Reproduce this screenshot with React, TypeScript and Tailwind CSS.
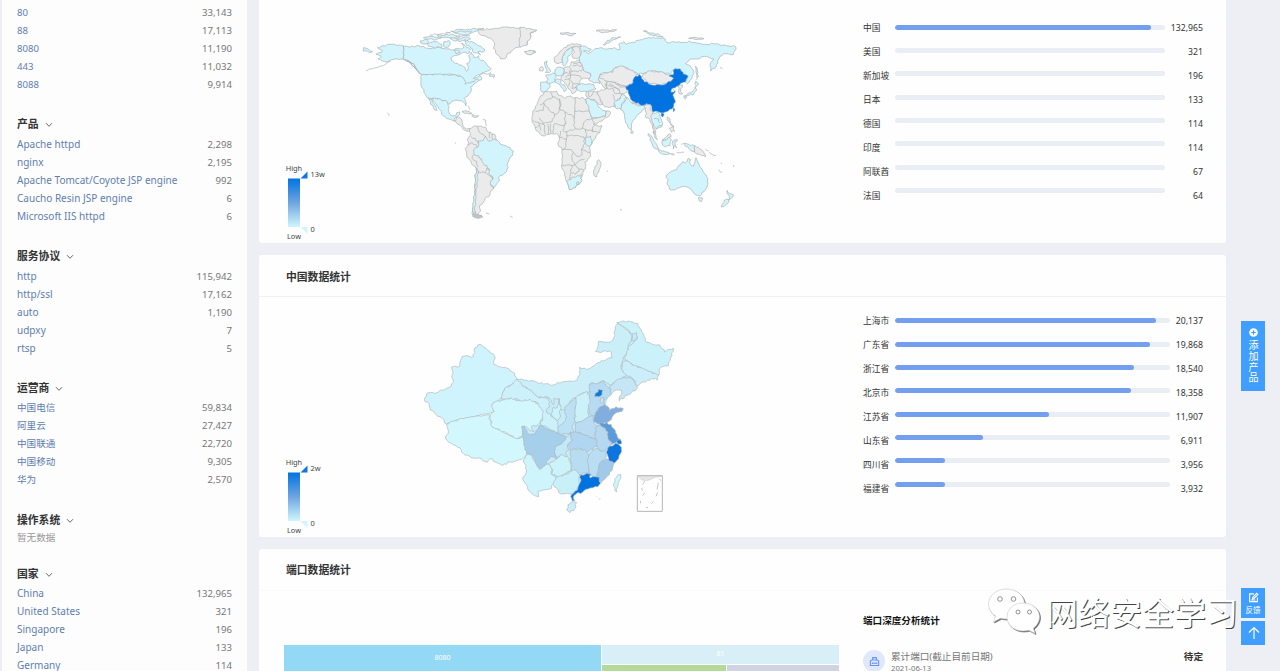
import React from "react";

type Row = [string, string];
type Shape = [string, string];

/* ---------- geometry helpers ---------- */

const hash = (a: number, b: number) => {
  const s = Math.sin(a * 12.9898 + b * 78.233) * 43758.5453;
  return s - Math.floor(s) - 0.5;
};

/** Turns a list of points into a path with slightly irregular, coast-like edges. */
function coast(points: string, close = true, amp = 6): string {
  const pts = points.trim().split(/\s+/).map((p) => p.split(",").map(Number));
  const n = pts.length;
  let d = "";
  for (let i = 0; i < (close ? n : n - 1); i++) {
    const a = pts[i];
    const b = pts[(i + 1) % n];
    const len = Math.hypot(b[0] - a[0], b[1] - a[1]);
    const steps = Math.max(1, Math.round(len / 7));
    d += (i === 0 ? "M" : "L") + a[0] + "," + a[1];
    for (let k = 1; k < steps; k++) {
      const t = k / steps;
      const x = a[0] + (b[0] - a[0]) * t;
      const y = a[1] + (b[1] - a[1]) * t;
      const o = hash(Math.round(x), Math.round(y)) * amp;
      d += "L" + (x - ((b[1] - a[1]) / len) * o).toFixed(1) + "," + (y + ((b[0] - a[0]) / len) * o).toFixed(1);
    }
    if (!close && i === n - 2) d += "L" + b[0] + "," + b[1];
  }
  return close ? d + "Z" : d;
}

const C = "#d2f5fd";
const G = "#ebebeb";
const B = "#0073e1";

const west: Shape[] = [
  [C, "160,93 140,91 120,88 100,92 82,98 97,106 94,113 78,118 94,124 84,132 96,138 110,141 125,134 138,131 160,132"],
  [C, "40,98 55,102 68,110 58,113 40,108"],
  [C, "160,93 180,97 200,92 220,94 240,101 262,97 282,101 305,105 318,100 332,102 342,96 334,84 346,92 362,104 358,114 340,112 324,120 308,124 304,136 316,146 334,150 346,158 350,169 355,160 350,146 360,136 356,122 364,112 372,128 386,122 392,136 404,140 412,152 424,162 412,168 396,174 382,180 370,192 388,182 396,188 388,196 372,200 360,204 345,208 344,196 332,184 310,179 215,179 204,168 194,152 178,138 160,132"],
  [C, "215,179 310,179 332,184 344,196 345,208 360,204 384,192 386,197 372,206 362,216 364,222 356,238 343,250 349,264 347,273 341,262 325,257 305,259 296,268 286,256 276,258 266,251 235,249 222,232 213,210"],
  [C, "248,250 266,251 276,258 286,256 294,270 296,290 306,303 318,302 320,293 329,291 325,303 313,310 312,318 296,312 280,302 266,280"],
  [C, "235,249 246,252 252,268 260,287 250,278"],
  [G, "312,318 325,306 336,315 338,330 350,342 360,340 358,349 344,346 330,330"],
  [G, "358,343 372,333 392,333 408,338 415,352 434,358 442,378 430,380 404,390 382,402 386,424 402,440 418,460 430,490 432,517 424,526 420,540 405,550 400,562 388,576 392,588 382,600 374,606 366,596 368,580 374,530 378,460 364,445 350,418 346,400 356,386 352,376 360,362"],
  [C, "385,378 400,376 406,364 415,378 432,372 442,376 452,388 480,398 490,408 487,422 476,438 470,470 450,482 444,502 432,517 420,500 430,490 416,475 418,462 400,445 385,422 372,418 371,405 384,396"],
  [C, "379,458 386,474 381,500 378,530 376,560 373,582 378,596 368,590 371,560 376,510"],
  ["#bfc5c6", "370,594 382,598 398,606 384,610 368,604"],
  [G, "383,46 410,41 450,39 490,37 528,42 560,46 540,54 543,66 530,78 530,90 508,96 484,108 470,122 464,131 452,132 442,120 430,100 434,84 422,70 400,62 386,54"],
  [G, "524,110 540,106 557,111 545,118 530,117"],
  [C, "210,78 225,73 236,79 232,86 214,85"],
  [C, "232,86 255,80 275,88 276,97 250,97 236,94"],
  [C, "220,68 250,65 275,68 260,73 230,74"],
  [C, "282,80 296,76 300,88 290,98 280,90"],
  [C, "262,62 290,58 312,60 330,66 310,72 280,68"],
  [C, "304,48 340,44 372,40 402,41 380,48 360,56 338,60 316,56"],
  [C, "300,70 330,72 352,66 362,72 344,78 316,78"],
  [C, "344,74 365,80 384,92 405,104 402,110 384,110 392,120 372,114 368,102 352,92"],
  [C, "312,106 326,106 330,114 318,116"],
  [C, "420,176 434,180 432,187 418,184"],
  [G, "336,290 352,288 366,296 352,295"],
  [G, "368,298 386,302 380,307 366,304"],
];

const westLines = [
  "48,168 66,162 84,157 104,150 122,140",
  "160,134 178,140 188,152 200,164 214,178",
  "166,136 184,146 196,162",
  "170,138 186,144 198,158 208,172",
  "286,54 304,50",
  "240,60 268,58 300,54",
  "310,52 340,50 366,48",
  "318,64 340,62 360,62",
  "388,182 400,174 414,178 424,170",
  "382,334 388,352 402,360 408,366",
  "362,364 376,370 384,386",
  "352,388 366,382 382,396",
  "372,418 366,430 380,440 384,456",
  "386,470 404,472 410,460 418,464",
  "404,472 420,484 428,494",
  "418,352 420,370",
  "428,356 428,372",
  "420,508 432,518",
  "112,293 118,302",
  "314,383 318,385",
  "408,594 418,597",
  "480,603 488,607",
  "398,313 408,316 408,334",
  "355,272 361,285",
];

const east: Shape[] = [
  [G, "0,36 25,40 50,46 30,54 33,66 22,78 22,90 0,97"],
  [G, "14,110 30,106 47,111 35,118 20,117"],
  [C, "73,142 82,138 81,150 88,160 93,168 88,173 76,173 82,165 76,156"],
  [G, "58,160 66,154 71,160 68,168 58,167"],
  [C, "62,202 85,203 91,210 84,222 78,230 66,231 61,224"],
  [C, "76,182 90,180 98,174 108,182 104,192 106,200 92,205 80,202 84,192"],
  [C, "106,162 118,156 130,160 132,172 124,182 110,182 104,174"],
  [C, "106,194 118,192 122,204 136,216 140,222 132,230 128,220 114,206 106,202"],
  [G, "104,142 102,128 116,116 132,98 150,90 170,86 184,90 176,96 156,96 140,108 130,124 126,142 114,146"],
  [C, "128,148 126,132 136,110 152,98 160,104 156,114 144,124 144,136 138,148 132,154"],
  [G, "156,98 174,94 180,110 182,122 172,130 160,130 156,122 164,112"],
  [G, "130,160 148,156 154,140 180,136 186,148 190,166 212,176 208,192 190,190 180,196 176,210 166,216 168,230 156,236 150,224 136,208 122,194 124,184 132,174"],
  [C, "170,214 180,208 200,208 222,210 228,222 208,230 184,230 172,224"],
  [C, "180,95 196,94 214,102 208,110 190,108 206,116 222,104 240,98 262,102 284,98 300,104 296,88 312,80 320,88 338,82 356,76 380,70 400,66 420,70 436,72 440,82 462,80 490,82 508,78 530,84 560,88 590,86 620,92 647,95 644,108 640,118 618,116 600,124 594,144 584,160 572,168 570,152 582,132 560,124 540,130 508,134 496,146 514,158 522,172 516,190 502,206 496,200 504,184 490,178 482,162 466,160 450,178 430,172 395,168 370,176 355,178 332,166 310,154 285,158 276,170 240,178 236,190 240,206 222,204 206,194 212,176 190,166 186,148 178,132 184,114"],
  [G, "240,178 262,174 278,172 285,158 310,154 332,166 355,178 342,190 338,204 318,214 300,210 284,202 262,200 256,208 264,220 252,218 244,206 234,192"],
  [G, "262,200 284,202 300,210 318,214 320,232 304,236 300,250 286,262 284,276 262,276 248,268 240,252 234,240 232,228 250,226 262,220"],
  [G, "200,230 222,228 234,240 240,252 248,268 236,268 224,254 206,250 198,244"],
  [G, "215,310 234,308 254,304 258,288 272,292 264,306 246,318 224,328"],
  [C, "196,252 206,250 222,256 234,274 248,286 258,288 256,304 234,308 218,308 208,288 198,268"],
  [C, "282,262 300,252 306,238 318,244 314,258 304,270 304,282 286,278"],
  [C, "304,270 314,258 320,246 328,256 336,264 356,270 372,270 388,268 384,278 368,284 354,298 340,316 334,344 326,340 316,316 312,294 302,284"],
  [G, "334,262 360,266 362,272 338,266"],
  [G, "334,346 340,350 337,356 332,354"],
  [G, "370,176 395,168 430,172 450,180 462,188 456,198 440,206 418,209 392,206 378,196 366,184"],
  [B, "318,215 340,203 342,190 358,179 370,195 385,207 418,210 440,206 462,190 448,183 460,180 464,162 480,162 490,178 504,184 496,200 470,214 454,222 452,232 466,228 458,240 466,260 460,276 444,288 420,292 398,290 392,268 380,265 372,270 348,264 332,252 325,234"],
  [B, "424,295 432,297 428,306 424,302"],
  [B, "460,280 464,282 461,290"],
  [G, "372,274 388,268 394,288 404,298 396,308 400,330 406,356 398,340 390,314 378,308 376,290"],
  [C, "398,294 414,291 420,304 427,322 424,336 410,342 402,332 396,320 392,306"],
  [G, "400,348 408,360 412,374 404,368"],
  [C, "384,356 398,370 410,388 416,402 408,402 396,386"],
  [C, "414,404 432,408 450,416 440,419 418,412"],
  [C, "426,378 440,374 450,362 454,374 450,392 436,396 428,390"],
  [G, "426,376 440,366 450,356 454,364 440,374"],
  [C, "458,378 472,374 464,382 470,398 462,392 460,402"],
  [G, "442,306 450,312 452,326 462,336 454,332 446,320"],
  [G, "448,340 460,336 464,348 454,352"],
  [C, "492,384 506,388 524,392 524,410 508,402 496,394"],
  [G, "524,392 540,402 552,414 556,426 540,418 524,412"],
  [C, "528,198 536,206 530,214 524,206"],
  [C, "526,214 530,226 520,240 504,242 494,244 506,234 518,228"],
  [C, "492,242 500,246 496,252"],
  [G, "474,214 488,210 482,222 488,236 480,238 476,226"],
  [C, "526,154 532,166 536,184 530,188 528,170"],
  [C, "440,480 452,470 470,464 476,452 488,440 496,444 504,430 512,434 510,446 520,454 525,440 528,428 534,442 542,458 558,480 564,504 552,530 540,543 524,538 514,524 506,518 486,514 466,524 448,522 442,500"],
  [C, "535,548 547,549 544,560 538,558"],
  [C, "621,526 630,536 641,540 632,552 624,556 628,544"],
  [C, "620,552 627,556 614,572 604,576 606,568"],
  [G, "58,250 72,232 92,230 110,228 114,240 134,250 146,244 166,248 192,250 204,270 206,288 214,308 222,330 246,332 240,352 226,370 210,392 212,424 194,442 196,462 188,478 184,496 166,518 148,523 140,500 134,480 125,450 128,422 126,404 114,388 118,368 110,356 92,356 66,362 48,346 36,322 38,294"],
  [C, "196,368 212,364 216,376 210,394 196,386"],
  [C, "140,500 152,494 160,486 172,482 184,478 186,496 166,518 148,523"],
  [G, "236,434 243,444 238,464 230,486 222,482 224,460"],
  [C, "250,90 262,76 284,68 302,66 280,74 266,84 256,90"],
  [G, "120,54 140,52 168,56 150,62 130,58"],
  [G, "228,48 256,46 290,44 268,50 240,51"],
  [C, "370,48 400,54 430,66 408,62 384,56"],
  [G, "506,70 530,68 552,71 528,74"],
];

const eastLines = [
  "92,232 98,246 70,264 60,270",
  "72,264 70,286 46,290",
  "70,264 104,300 96,320 70,326 58,308",
  "98,246 118,252 118,286 104,300",
  "118,252 122,286 134,290 164,308",
  "166,248 162,310",
  "162,288 204,288",
  "134,290 138,322 130,332 104,326",
  "164,308 160,330 166,342 186,340 196,318 214,310",
  "104,326 100,356",
  "84,328 86,358",
  "74,330 76,358",
  "92,326 92,356",
  "38,316 56,322 62,346",
  "58,322 74,332",
  "46,338 58,330",
  "138,322 128,346 140,350 164,342",
  "122,348 118,368 140,372 138,394 126,404",
  "140,350 138,372",
  "140,362 176,362 192,366 194,386 184,402 186,420 170,424 160,412 154,404 128,404",
  "196,342 198,366",
  "222,332 216,350 238,352",
  "186,340 196,344 220,346",
  "184,402 210,412",
  "160,412 156,430 164,450 178,436 194,432",
  "126,450 156,452 164,450",
  "156,452 150,492",
  "154,474 166,478 178,462 192,466",
  "164,450 178,462",
  "170,502 176,500 178,508 170,508 170,502",
  "150,158 152,172 132,176",
  "154,170 186,168",
  "152,180 176,182 184,190",
  "136,186 152,180 148,166",
  "134,194 150,192 152,180",
  "146,194 160,206 176,206",
  "150,200 146,214",
  "158,206 156,220 170,216",
  "160,144 184,144",
  "158,152 186,152",
  "236,186 262,198",
  "256,208 280,218 300,226",
  "284,202 300,216 318,216",
  "262,220 280,222 286,236 304,236",
  "268,204 290,220 300,234",
  "206,230 204,244",
  "222,228 216,240 206,244",
  "278,238 284,256",
  "466,230 458,222",
  "534,188 526,196",
  "408,342 414,334 426,332",
  "402,310 416,312 420,324",
  "470,412 480,414 492,412",
  "450,416 464,417",
  "454,418 462,421",
  "484,388 490,386",
  "556,402 566,408",
  "568,412 588,422",
  "596,464 606,472",
  "640,450 642,456",
  "602,444 606,446",
  "300,583 306,586",
  "260,468 264,469",
  "478,248 480,250",
  "600,158 608,160",
];

const china: Shape[] = [
  ["#d0f4fd", "45,263 56,248 74,250 92,240 118,232 130,218 124,172 150,168 158,138 190,140 194,114 210,103 232,120 254,138 252,164 290,174 314,190 322,208 308,222 284,236 276,264 246,282 252,304 236,312 200,318 160,326 136,332 110,342 90,320 60,300 58,282 46,276"],
  ["#d2f7fd", "110,342 136,332 160,326 200,318 236,312 246,350 270,360 300,376 322,386 336,380 346,400 352,436 334,448 300,456 278,467 258,456 240,446 232,457 206,444 180,440 160,430 150,414 124,400 106,384 114,372"],
  ["#d2f7fd", "240,316 252,304 246,282 276,270 304,264 330,272 360,268 386,282 400,304 398,324 384,344 364,350 372,364 356,358 338,348 336,380 322,386 300,376 270,360 246,350"],
  ["#ccf1fb", "322,208 336,212 336,226 362,240 378,256 384,262 414,262 420,290 408,302 424,320 440,330 444,352 440,372 422,360 400,348 388,348 398,324 400,304 386,282 360,268 330,272 304,264 276,268 284,236 308,222"],
  ["#cbeff9", "322,208 370,212 400,222 430,225 456,216 480,213 500,212 510,194 508,172 530,178 550,168 574,152 606,142 604,126 586,122 572,128 556,124 566,94 600,97 612,82 616,50 624,38 640,50 658,66 668,74 664,90 654,104 650,130 640,142 636,160 634,176 650,196 634,206 616,214 600,226 580,212 560,222 542,220 540,244 516,250 498,262 480,275 466,300 450,300 448,272 432,264 430,284 414,262 384,262 378,256 362,240 336,226"],
  ["#cbf2fb", "620,38 655,33 682,40 694,60 706,92 730,104 748,104 764,126 790,115 786,138 776,156 774,168 748,176 746,196 716,184 690,172 670,166 654,154 642,142 650,130 654,112 672,96 682,82 680,68 664,72 640,50"],
  ["#cbeefa", "642,154 654,154 670,166 690,172 716,184 746,196 742,210 724,206 700,216 684,228 666,204 650,198 634,176"],
  ["#c5e6f5", "634,206 650,204 666,204 674,220 684,232 664,248 628,272 634,240 612,244 600,256 602,226 616,214"],
  ["#b6dbf2", "538,222 560,222 580,212 588,226 602,236 604,254 590,266 580,270 584,284 566,294 554,318 540,314 534,282 540,244"],
  ["#cbf2f9", "498,262 516,250 534,246 540,270 534,300 536,320 516,334 496,340 494,306"],
  ["#bde1f4", "480,276 498,264 494,306 494,338 486,352 492,368 470,372 446,370 444,352 462,336 470,320 464,304 464,290"],
  ["#ccf2fa", "430,292 442,292 446,264 454,292 448,304 452,318 442,332 426,318"],
  ["#b9dcf2", "496,342 516,334 536,320 550,318 552,340 566,348 556,366 558,384 540,382 516,370 496,366"],
  ["#b6d8f1", "556,352 570,344 580,356 592,356 594,376 598,392 608,402 594,416 578,424 562,412 556,386"],
  ["#82aedf", "554,318 566,294 584,284 598,294 598,302 618,290 640,296 636,304 618,308 604,328 590,340 570,342 550,334"],
  ["#5b9bdc", "568,340 590,338 604,344 616,362 622,380 632,388 622,396 606,402 594,386 594,366 580,352"],
  ["#0a77e2", "620,394 632,390 634,402 624,402"],
  ["#0c75df", "588,426 600,408 616,400 634,412 632,430 626,446 612,460 596,452"],
  ["#b0d6f1", "480,366 496,366 516,372 540,382 558,386 562,408 548,416 530,424 510,416 478,416 472,404 486,392"],
  ["#c3e8f7", "434,412 450,404 466,384 480,368 486,392 472,404 476,420 466,430 470,444 450,438 438,446"],
  ["#a5cfeb", "335,350 344,350 356,372 374,372 386,350 400,348 422,360 440,368 468,380 462,394 448,404 434,412 434,430 440,446 422,440 410,452 404,468 388,478 378,462 366,436 350,432 342,396"],
  ["#b8ddf3", "480,420 510,416 530,424 538,436 534,456 536,490 520,488 506,494 484,480"],
  ["#b9def4", "538,432 548,418 562,414 578,424 590,424 588,442 574,456 566,474 564,496 548,500 538,490 534,460"],
  ["#a1c9ea", "588,446 598,454 612,460 606,482 592,498 574,518 560,500 566,474 574,454"],
  ["#0073e0", "512,494 530,490 544,492 540,504 554,500 568,502 572,520 564,530 540,534 518,546 498,552 490,560 494,572 486,572 484,554 502,540 510,518"],
  ["#c9eff8", "430,510 444,498 470,492 492,478 508,492 508,518 500,538 486,552 452,552 442,536 430,526"],
  ["#cdf3fa", "414,462 438,448 454,432 472,440 480,456 482,480 460,494 442,500 424,492 428,478"],
  ["#cef5fb", "340,450 352,434 366,436 378,462 388,478 404,468 414,462 426,478 424,492 438,504 430,520 424,536 400,540 384,544 386,560 370,554 356,542 350,524 338,508 350,480"],
  ["#c9eff9", "474,584 484,576 500,578 494,596 480,608 470,600"],
  ["#cff6fc", "610,528 614,508 624,494 632,494 628,514 622,532 620,546"],
  ["#0b78de", "556,250 564,246 566,238 578,240 576,254 566,260 554,260"],
  ["#c5e6f5", "572,264 582,262 582,278 570,276"],
];

const chinaLines = [
  "658,66 668,84 664,92 676,90 682,80",
  "566,568 571,566",
  "560,560 562,562",
];

function WorldMap() {
  return (
    <svg viewBox="0 0 1200 645" className="ml-[15px] mt-[15px] h-[215px] w-[400px] shrink-0" strokeLinejoin="round">
      <g stroke="#a3abad" strokeWidth="1.9">
        {west.map(([f, p], i) => (
          <path key={i} d={coast(p)} fill={f} />
        ))}
        {westLines.map((p, i) => (
          <path key={i} d={coast(p, false)} fill="none" />
        ))}
      </g>
      <g transform="translate(510 0)" stroke="#a3abad" strokeWidth="1.9">
        {east.map(([f, p], i) => (
          <path key={i} d={coast(p)} fill={f} stroke={f === B ? "#3a86d4" : undefined} />
        ))}
        {eastLines.map((p, i) => (
          <path key={i} d={coast(p, false)} fill="none" />
        ))}
      </g>
    </svg>
  );
}

function ChinaMap() {
  return (
    <svg viewBox="0 0 840 645" className="ml-[75px] mt-[13px] h-[215px] w-[280px] shrink-0" strokeLinejoin="round">
      <path
        d="M250 280L330 232L500 238L600 155L632 130L640 62L690 64L690 160L680 215L600 240L575 330L600 400L590 440L560 490L500 520L440 520L350 440L300 370Z"
        fill="#c6ebf8"
      />
      <g stroke="#adb8bb" strokeWidth="2">
        {china.map(([f, p], i) => (
          <path key={i} d={coast(p)} fill={f} />
        ))}
        {chinaLines.map((p, i) => (
          <path key={i} d={coast(p, false)} fill="none" />
        ))}
      </g>
      <rect x="682" y="497" width="75" height="107" fill="#fff" stroke="#b5b5b5" strokeWidth="3" />
      <path d="M683 499L696 510L712 512L736 502L755 499Z" fill="#e6e6e6" stroke="#c4c4c4" strokeWidth="1.5" />
      <path
        d="M704 513L698 524M748 506L752 512M745 518L741 538M695 534L697 542M704 549L698 557M743 547L738 559M691 572L692 580M730 575L724 581M708 592L714 593"
        stroke="#a8a8a8"
        strokeWidth="2"
        fill="none"
      />
    </svg>
  );
}

function Legend({ id, max, className }: { id: string; max: string; className: string }) {
  return (
    <svg viewBox="0 0 52 80" className={`h-[80px] w-[52px] shrink-0 ${className}`}>
      <defs>
        <linearGradient id={id} x1="0" y1="0" x2="0" y2="1">
          <stop offset="0" stopColor="#0073e1" />
          <stop offset="0.5" stopColor="#6ea5e0" />
          <stop offset="1" stopColor="#cff6fd" />
        </linearGradient>
      </defs>
      <rect x="5" y="18.5" width="12" height="48.5" fill={`url(#${id})`} />
      <path d="M17.5 18.5L24.5 11.5V18.5Z" fill="#0f76df" />
      <path d="M17.5 67H24.5V74Z" fill="#d0f5fc" />
      <g fill="#444" fontSize="7.4" fontFamily="'Noto Sans', sans-serif">
        <text x="2.7" y="11.4">High</text>
        <text x="4" y="78.6">Low</text>
        <text x="27.5" y="17.4">{max}</text>
        <text x="27.5" y="72.3">0</text>
      </g>
    </svg>
  );
}

/* ---------- data ---------- */

const sections: { title: string; rows: Row[]; lowered?: boolean }[] = [
  { title: "产品", lowered: true, rows: [["Apache httpd", "2,298"], ["nginx", "2,195"], ["Apache Tomcat/Coyote JSP engine", "992"], ["Caucho Resin JSP engine", "6"], ["Microsoft IIS httpd", "6"]] },
  { title: "服务协议", lowered: true, rows: [["http", "115,942"], ["http/ssl", "17,162"], ["auto", "1,190"], ["udpxy", "7"], ["rtsp", "5"]] },
  { title: "运营商", rows: [["中国电信", "59,834"], ["阿里云", "27,427"], ["中国联通", "22,720"], ["中国移动", "9,305"], ["华为", "2,570"]] },
  { title: "操作系统", rows: [] },
  { title: "国家", rows: [["China", "132,965"], ["United States", "321"], ["Singapore", "196"], ["Japan", "133"], ["Germany", "114"]] },
];

const ports: Row[] = [["80", "33,143"], ["88", "17,113"], ["8080", "11,190"], ["443", "11,032"], ["8088", "9,914"]];

const countries: [string, string, number][] = [
  ["中国", "132,965", 256], ["美国", "321", 0], ["新加坡", "196", 0], ["日本", "133", 0],
  ["德国", "114", 0], ["印度", "114", 0], ["阿联酋", "67", 0], ["法国", "64", 0],
];

const provinces: [string, string, number][] = [
  ["上海市", "20,137", 261], ["广东省", "19,868", 255], ["浙江省", "18,540", 239], ["北京市", "18,358", 236],
  ["江苏省", "11,907", 153.5], ["山东省", "6,911", 87.5], ["四川省", "3,956", 49.5], ["福建省", "3,932", 49.5],
];

/* ---------- pieces ---------- */

function Rows({ rows, lowered }: { rows: Row[]; lowered?: boolean }) {
  return (
    <ul className={lowered ? "-mb-px pt-px" : ""}>
      {rows.map(([k, v]) => (
        <li key={k} className="flex h-[18px] items-center justify-between text-[#5f7eae]">
          <span className={/[A-Za-z]/.test(k) ? "mb-[2px] text-[10px] leading-[16px] tracking-[0.02px]" : ""}>{k}</span>
          <span className="text-[#777]">{v}</span>
        </li>
      ))}
    </ul>
  );
}

function BarList({ items, wide }: { items: [string, string, number][]; wide?: boolean }) {
  return (
    <div className="flex w-[340px] text-[8.7px] text-[#333]">
      <div className="w-[32px] shrink-0 pt-px">
        {items.map(([k]) => (
          <div key={k} className="flex h-[23.95px] items-center whitespace-nowrap">{k}</div>
        ))}
      </div>
      <div className={`shrink-0 ${wide ? "w-[275px]" : "w-[270px]"}`}>
        {items.map(([k, , w]) => (
          <div key={k} className="flex h-[23.35px] items-center">
            <div className="h-[5px] w-full overflow-hidden rounded-full bg-[#e9edf4]">
              <div className="h-full rounded-full bg-[#739fee]" style={{ width: w }} />
            </div>
          </div>
        ))}
      </div>
      <div className="flex-1 pt-px">
        {items.map(([k, v]) => (
          <div key={k} className="flex h-[23.95px] items-center justify-end">{v}</div>
        ))}
      </div>
    </div>
  );
}

function CardTitle({ children, className }: { children: React.ReactNode; className: string }) {
  return (
    <h2 className={`flex h-[42px] items-center border-b pl-[27px] text-[10.8px] font-bold text-[#333] ${className}`}>{children}</h2>
  );
}

function Watermark() {
  return (
    <div className="absolute left-[985px] top-[587px] flex items-center">
      <svg viewBox="0 0 60 52" className="h-[52px] w-[60px] shrink-0 drop-shadow-[1px_1px_0.5px_#666]">
        <g fill="#fff" stroke="#c8c8c8" strokeWidth="0.6">
          <path d="M21.5 2C11.500 2 3.500 8.500 3.500 17C3.500 22 6.200 26.300 10.500 29L8.500 35L15.500 31.300C17.500 31.900 19.500 32 21.500 32C31.500 32 39.500 25.500 39.500 17S31.500 2 21.500 2Z" />
          <path d="M38 16C29 16 22 22 22 30C22 38 29 44 38 44C40 44 42 43.700 43.800 43.200L50 46.500L48.400 41.200C52 38.600 54.500 34.500 54.500 30C54.500 22 47 16 38 16Z" />
        </g>
        <g fill="#fff" stroke="#777" strokeWidth="0.8">
          <circle cx="15" cy="12" r="2.300" />
          <circle cx="28.500" cy="12" r="2.300" />
          <circle cx="33" cy="25" r="2" />
          <circle cx="44.500" cy="25" r="2" />
        </g>
      </svg>
      <span className="ml-px whitespace-nowrap text-[32px] leading-[52px] text-white [text-shadow:1px_1px_0.5px_#444]">网络安全学习</span>
    </div>
  );
}

export default function App() {
  return (
    <div className="relative flex h-[671px] w-[1280px] overflow-hidden bg-[#edeff4] pl-[2px] font-['Noto_Sans','Noto_Sans_CJK_SC',sans-serif]">
      <aside className="h-full w-[245px] shrink-0 bg-[#fdfdfd] pl-[15px] pr-[15px] pt-[3px] text-[9.6px] leading-[18px]">
        <Rows rows={ports} lowered />
        {sections.map((s) => (
          <section key={s.title} className="mt-[20px]">
            <h3 className="flex h-[22px] items-center gap-[6px] text-[10.8px] font-bold text-[#333]">
              {s.title}
              <svg viewBox="0 0 8 6" className="mt-px h-[6px] w-[8px]">
                <path d="M1 1.200L4 4.300L7 1.200" fill="none" stroke="#555" strokeWidth="0.9" />
              </svg>
            </h3>
            {s.rows.length ? (
              <Rows rows={s.rows} lowered={s.lowered} />
            ) : (
              <p className="flex h-[12px] items-center pt-px text-[#999]">暂无数据</p>
            )}
          </section>
        ))}
      </aside>

      <main className="ml-[12px] w-[967px] shrink-0">
        <section className="flex h-[243px] items-start rounded-b-[3px] bg-[#fefefe] pl-[24px]">
          <Legend id="world-scale" max="13w" className="mt-[160px]" />
          <WorldMap />
          <div className="ml-[113px] mt-[15.5px]">
            <BarList items={countries} />
          </div>
        </section>

        <section className="mt-[12px] h-[282px] rounded-[3px] bg-[#fefefe]">
          <CardTitle className="border-[#eff1f4] pt-[4px]">中国数据统计</CardTitle>
          <div className="flex items-start pl-[24px]">
            <Legend id="china-scale" max="2w" className="mt-[157px]" />
            <ChinaMap />
            <div className="ml-[173px] mt-[12px]">
              <BarList items={provinces} wide />
            </div>
          </div>
        </section>

        <section className="mt-[12px] h-[140px] rounded-t-[3px] bg-[#fefefe]">
          <CardTitle className="border-[#f9fafb] pt-[2px]">端口数据统计</CardTitle>
          <div className="flex pl-[25px]">
            <div className="mt-[54px] flex h-[40px] w-[555px] shrink-0 gap-px text-[7px] text-white">
              <div className="flex h-[26px] w-[317px] shrink-0 items-center justify-center bg-[#93d8f5]">8080</div>
              <div className="flex-1">
                <div className="flex h-[19px] items-center justify-center bg-[#d8eff8]">81</div>
                <div className="mt-px flex h-[20px] gap-px">
                  <div className="w-[124px] bg-[#b4da9b]" />
                  <div className="flex-1 bg-[#d0d4e1]" />
                </div>
              </div>
            </div>
            <div className="ml-[24px] w-[340px] pt-[22px] text-[9.6px]">
              <h3 className="h-[16px] font-bold leading-[16px] text-[#111]">端口深度分析统计</h3>
              <div className="mt-[21px] flex items-start">
                <div className="flex h-[22px] w-[22px] items-center justify-center rounded-full bg-[#dfe8fc]">
                  <svg viewBox="0 0 12 12" className="h-[11px] w-[11px]" fill="none" stroke="#6593ee" strokeWidth="1.200">
                    <path d="M4 4.500V1.800H8V4.500M1.500 5.500L3 4.300H9L10.500 5.500V10.300H1.500ZM3.700 7V8.600M5.300 7V8.600M6.800 7V8.600M8.400 7V8.600" />
                  </svg>
                </div>
                <div className="ml-[6px] pt-px leading-[12px] text-[#777]">
                  <p>累计端口(截止目前日期)</p>
                  <p className="text-[7.7px] leading-[11px]">2021-06-13</p>
                </div>
                <span className="ml-auto pt-px font-bold leading-[12px] text-[#333]">待定</span>
              </div>
            </div>
          </div>
        </section>
      </main>

      <Watermark />

      <nav className="relative ml-[15px] w-[24px] shrink-0 pt-[321px] text-white">
        <button className="flex h-[70px] w-full flex-col items-center bg-[#409eff] pt-[7px] text-[10px]">
          <svg viewBox="0 0 10 10" className="mb-[3px] h-[9px] w-[9px] shrink-0">
            <circle cx="5" cy="5" r="4.800" fill="#fff" />
            <path d="M5 2.500V7.500M2.500 5H7.500" stroke="#409eff" strokeWidth="1.300" />
          </svg>
          <span className="leading-[14px] tracking-[0.9px] [writing-mode:vertical-rl]">添加产品</span>
        </button>
        <button className="mt-[197px] flex h-[30px] w-full flex-col items-center bg-[#409eff] pt-[4px] text-[7.5px] leading-[10px]">
          <svg viewBox="0 0 12 12" className="mb-[2px] h-[11px] w-[11px] shrink-0" fill="none" stroke="#fff" strokeWidth="1.200">
            <path d="M6.500 2H1.800V10.500H10.200V6M5 7.500L5.300 5.800L9.500 1.500L10.800 2.800L6.600 7.100ZM3.500 8.800H8" />
          </svg>
          反馈
        </button>
        <button className="mt-[3px] flex h-[24px] w-full items-center justify-center bg-[#409eff] pl-[2px]">
          <svg viewBox="0 0 12 14" className="h-[14px] w-[12px]" fill="none" stroke="#fff" strokeWidth="1.200">
            <path d="M6 13V1.500M1 6.500L6 1.500L11 6.500" />
          </svg>
        </button>
      </nav>
    </div>
  );
}
